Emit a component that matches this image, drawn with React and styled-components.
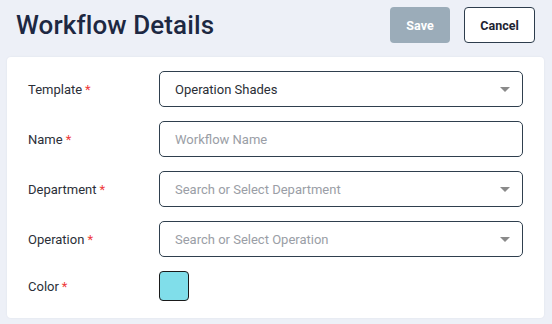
import React from "react";
import styled, { createGlobalStyle } from "styled-components";

const GlobalStyle = createGlobalStyle`
  html, body {
    margin: 0;
    padding: 0;
    background: #edf0f7;
    font-family: Roboto, "Liberation Sans", sans-serif;
  }
`;

const Page = styled.div`
  width: 552px;
  height: 324px;
  box-sizing: border-box;
  padding: 7px 8px 0 7px;
`;

const Header = styled.div`
  display: flex;
  align-items: center;
  justify-content: space-between;
  height: 36px;
  margin-bottom: 14px;
  padding-left: 9px;
  padding-right: 9px;
`;

const Title = styled.h1`
  margin: 0;
  font-size: 26px;
  font-weight: 500;
  color: #1d2842;
  letter-spacing: 0.1px;
`;

const Actions = styled.div`
  display: flex;
  gap: 14px;
`;

const Button = styled.button`
  height: 36px;
  box-sizing: border-box;
  border-radius: 4px;
  font-family: Roboto, "Liberation Sans", sans-serif;
  font-size: 12.5px;
  font-weight: 700;
  padding: 0;
  width: ${p => p.width}px;
  background: ${p => (p.primary ? "#9bacb9" : "#fff")};
  color: ${p => (p.primary ? "#fff" : "#1d2331")};
  border: ${p => (p.primary ? "none" : "1px solid #2d3d4d")};
`;

const Card = styled.div`
  background: #fff;
  border-radius: 4px;
  box-shadow: 0 0 2px rgba(40, 50, 80, 0.08);
  padding: 14px 21px 17px 21px;
  display: flex;
  flex-direction: column;
  gap: 14px;
`;

const Row = styled.div`
  display: grid;
  grid-template-columns: 131px 1fr;
  align-items: center;
`;

const Label = styled.label`
  font-size: 13px;
  color: #2b2f38;
`;

const Star = styled.span`
  color: #ee3b3b;
  margin-left: 3px;
`;

const Field = styled.div`
  height: 36px;
  box-sizing: border-box;
  border: 1.5px solid #2f3f4e;
  border-radius: 5px;
  display: flex;
  align-items: center;
  justify-content: space-between;
  padding: 0 12px 0 15px;
  font-size: 13px;
  color: ${p => (p.placeholder ? "#9a9ea6" : "#2a2e36")};
`;

const Caret = styled.span`
  width: 0;
  height: 0;
  border-left: 5px solid transparent;
  border-right: 5px solid transparent;
  border-top: 5px solid #8a8a8a;
`;

const Swatch = styled.div`
  width: 30px;
  height: 30px;
  box-sizing: border-box;
  border: 1.5px solid #1a1a1a;
  border-radius: 4px;
  background: ${p => p.color};
`;

const fields = [
  { label: "Template", value: "Operation Shades", select: true },
  { label: "Name", value: "Workflow Name", placeholder: true },
  { label: "Department", value: "Search or Select Department", placeholder: true, select: true },
  { label: "Operation", value: "Search or Select Operation", placeholder: true, select: true }
];

export default function App() {
  return (
    <>
      <GlobalStyle />
      <Page>
        <Header>
          <Title>Workflow Details</Title>
          <Actions>
            <Button primary width={60}>Save</Button>
            <Button width={71}>Cancel</Button>
          </Actions>
        </Header>
        <Card>
          {fields.map(f => (
            <Row key={f.label}>
              <Label>
                {f.label}
                <Star>*</Star>
              </Label>
              <Field placeholder={f.placeholder ? 1 : 0}>
                <span>{f.value}</span>
                {f.select && <Caret />}
              </Field>
            </Row>
          ))}
          <Row>
            <Label>
              Color
              <Star>*</Star>
            </Label>
            <Swatch color="#80deea" />
          </Row>
        </Card>
      </Page>
    </>
  );
}
